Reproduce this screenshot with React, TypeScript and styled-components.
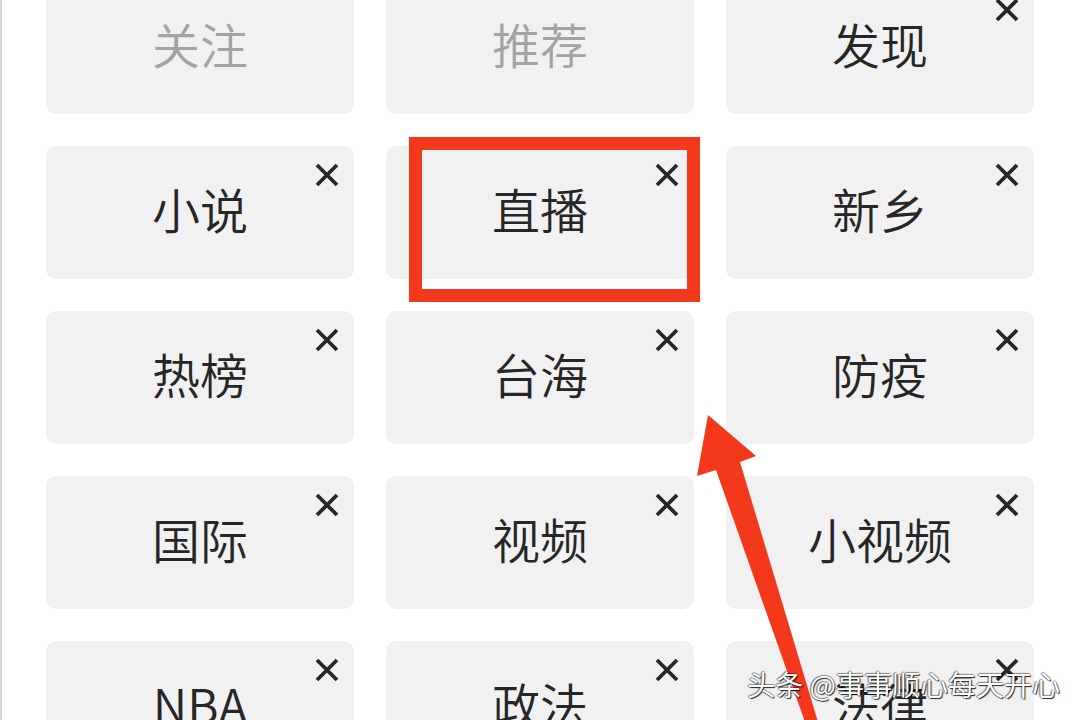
import React from "react";
import styled, { createGlobalStyle } from "styled-components";

const Global = createGlobalStyle`
  html, body { margin: 0; padding: 0; background: #ffffff; }
  body { font-family: "Noto Sans CJK SC", "Noto Sans", sans-serif; }
`;

const Page = styled.div`
  position: relative;
  width: 1080px;
  height: 720px;
  overflow: hidden;
  background: #ffffff;
  box-sizing: border-box;
  border-left: 2px solid #d6d6d6;
  padding-left: 44px;
`;

const Grid = styled.div`
  display: grid;
  grid-template-columns: repeat(3, 308px);
  grid-auto-rows: 133px;
  column-gap: 32px;
  row-gap: 32px;
  margin-top: -19px;
`;

const Tile = styled.div`
  position: relative;
  background: #f1f1f1;
  border-radius: 10px;
  display: flex;
  align-items: center;
  justify-content: center;
  padding-bottom: 10px;
  box-sizing: border-box;
`;

const Label = styled.span<{ $muted?: boolean }>`
  font-family: "Noto Sans CJK SC", "Noto Sans", sans-serif;
  font-size: 48px;
  line-height: 1;
  font-weight: 350;
  color: ${(p) => (p.$muted ? "#a3a3a3" : "#262626")};
`;

const Close = styled.svg`
  position: absolute;
  right: 14px;
  top: 16px;
  width: 26px;
  height: 26px;
`;

const Highlight = styled.div`
  position: absolute;
  left: 407px;
  top: 137px;
  width: 291px;
  height: 165px;
  box-sizing: border-box;
  border: 13px solid #f4381b;
  pointer-events: none;
`;

const Overlay = styled.svg`
  position: absolute;
  left: -2px;
  top: 0;
  width: 1080px;
  height: 720px;
  pointer-events: none;
`;

const Watermark = styled.div`
  position: absolute;
  right: 20px;
  top: 667px;
  font-family: "Noto Sans CJK SC", "Noto Sans", sans-serif;
  font-size: 28px;
  line-height: 34px;
  color: #ffffff;
  white-space: nowrap;
  text-shadow: 1px 1px 1px rgba(0, 0, 0, 0.85), -1px 0 1px rgba(0, 0, 0, 0.5),
    0 -1px 1px rgba(0, 0, 0, 0.4);
`;

type Item = { text: string; muted?: boolean; fixed?: boolean };

const items: Item[] = [
  { text: "关注", muted: true, fixed: true },
  { text: "推荐", muted: true, fixed: true },
  { text: "发现" },
  { text: "小说" },
  { text: "直播" },
  { text: "新乡" },
  { text: "热榜" },
  { text: "台海" },
  { text: "防疫" },
  { text: "国际" },
  { text: "视频" },
  { text: "小视频" },
  { text: "NBA" },
  { text: "政法" },
  { text: "法律" },
];

const CloseIcon = () => (
  <Close viewBox="0 0 26 26">
    <path
      d="M3 3 L23 23 M23 3 L3 23"
      stroke="#262626"
      strokeWidth="3.8"
      fill="none"
    />
  </Close>
);

export default function App() {
  return (
    <>
      <Global />
      <Page>
        <Grid>
          {items.map((it) => (
            <Tile key={it.text}>
              <Label $muted={it.muted}>{it.text}</Label>
              {!it.fixed && <CloseIcon />}
            </Tile>
          ))}
        </Grid>
        <Highlight />
        <Overlay viewBox="0 0 1080 720">
          <polygon
            points="708,415 756,456 740,462 818,722 805,722 716,470 697,476"
            fill="#f4381b"
          />
        </Overlay>
        <Watermark>头条 @事事顺心每天开心</Watermark>
      </Page>
    </>
  );
}
